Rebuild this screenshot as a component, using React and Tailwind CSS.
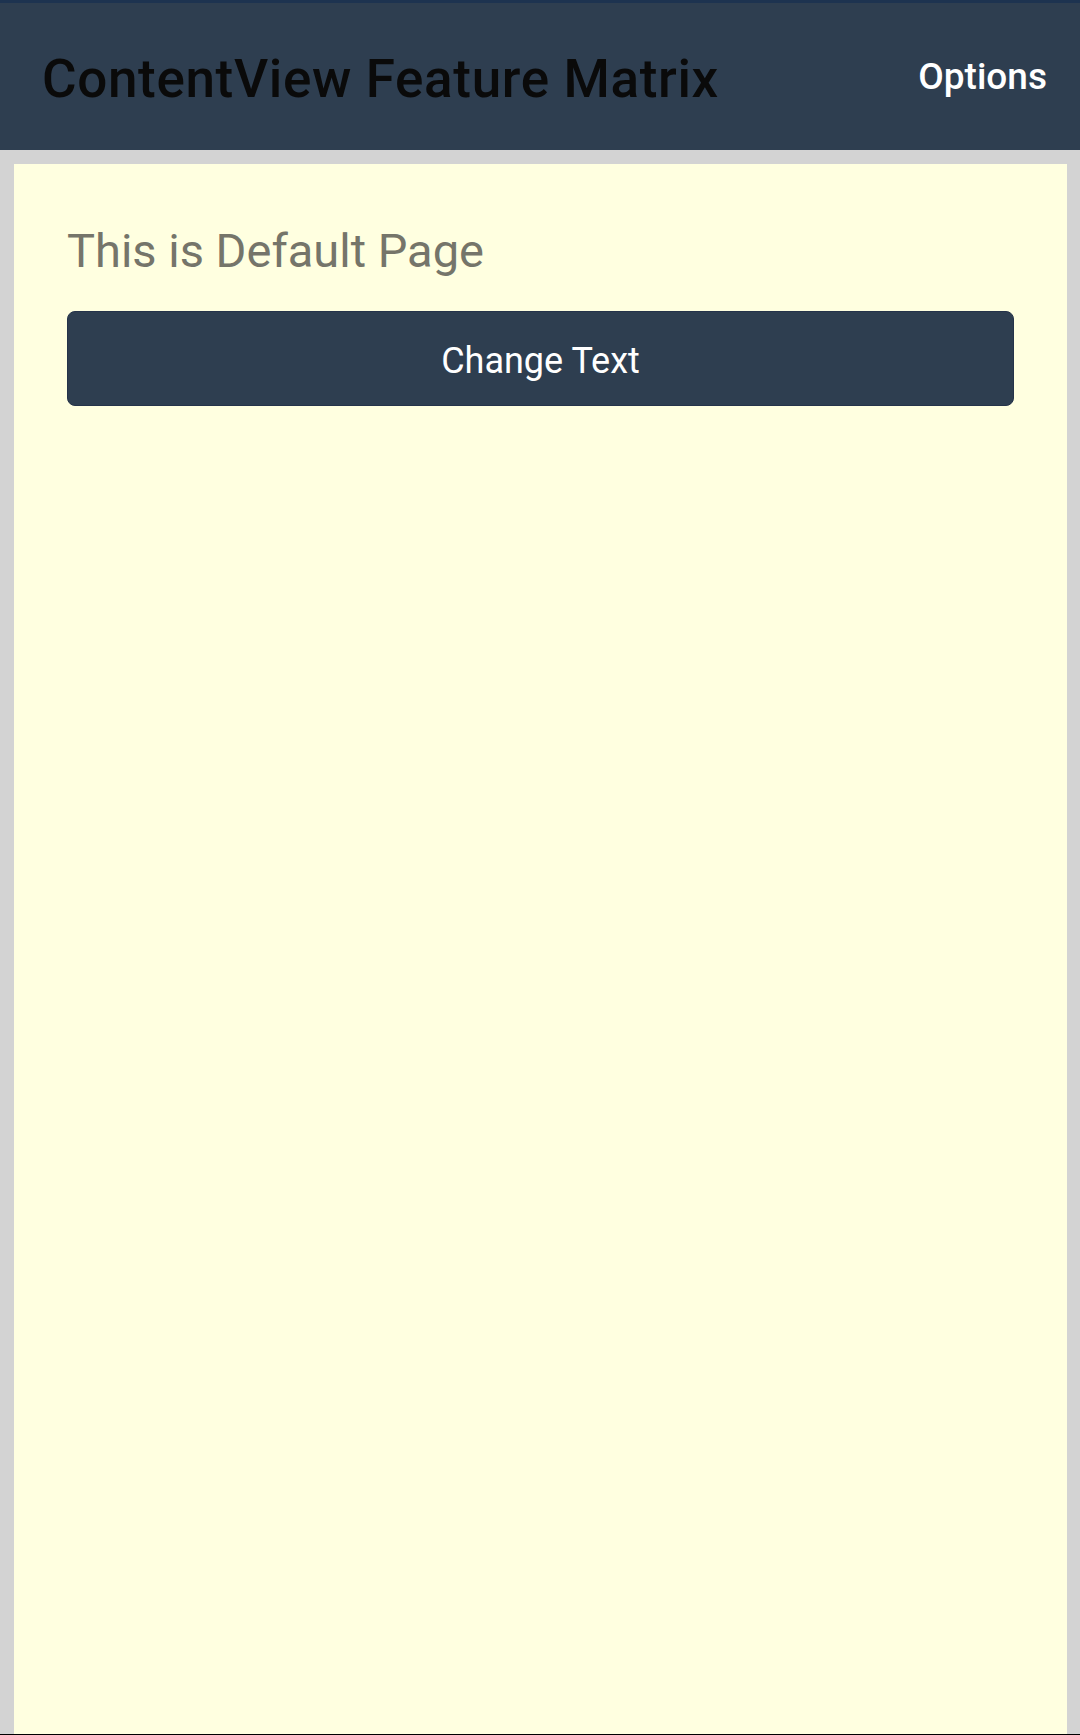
export default function App() {
  return (
    <div className="flex h-[1735px] flex-col border-b border-black bg-[#d3d3d3] font-['Roboto',sans-serif]">
      <header className="flex h-[150px] shrink-0 items-center justify-between border-t-[3px] border-[#1d3350] bg-[#2e3e50] pl-[42px] pr-[33px]">
        <h1 className="mt-[6px] text-[53px] font-medium leading-[53px] tracking-[0.65px] text-[#0a0a0a]">
          ContentView Feature Matrix
        </h1>
        <button className="text-[37px] font-medium leading-[37px] text-white">Options</button>
      </header>
      <main className="flex flex-1 flex-col pl-[14px] pr-[13px] pt-[14px]">
        <div className="flex flex-1 flex-col bg-[#ffffe0] px-[53px] pt-[63px]">
          <p className="text-[47px] leading-[47px] text-[#75756a]">This is Default Page</p>
          <button className="mt-[37px] flex h-[95px] items-center justify-center rounded-[8px] border border-[#25334a] bg-[#2e3e50] pt-[4px] text-[36px] text-white">
            Change Text
          </button>
        </div>
      </main>
    </div>
  );
}
